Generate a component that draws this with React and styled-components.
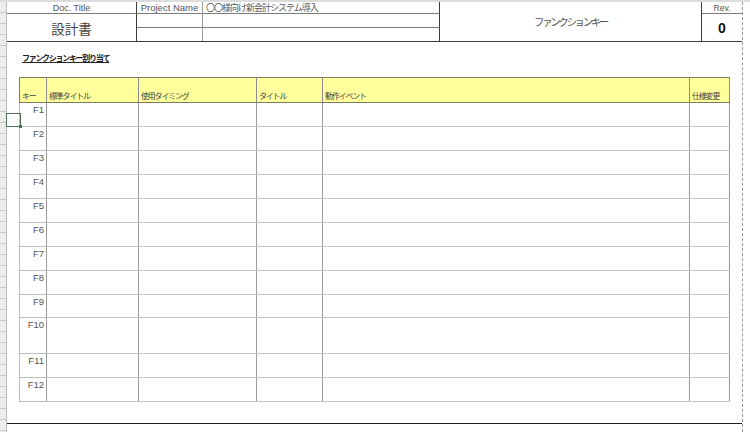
import React from 'react';
import styled, { createGlobalStyle } from 'styled-components';

const GlobalStyle = createGlobalStyle`
  html, body {
    margin: 0;
    padding: 0;
    background: #fff;
  }
  body {
    font-family: "Liberation Sans", "Noto Sans CJK JP", sans-serif;
    color: #444;
  }
`;

const JP = `"Liberation Sans", "Noto Sans CJK JP", sans-serif`;

const Page = styled.div`
  display: flex;
  width: 750px;
  height: 432px;
  overflow: hidden;
  border-top: 2px solid #dcdcdc;
  box-sizing: border-box;
  position: relative;
`;

const RowHeader = styled.div`
  width: 6px;
  flex: none;
  background: repeating-linear-gradient(
    to bottom,
    #ececec 0px,
    #ececec 10px,
    #c9c9c9 10px,
    #c9c9c9 11px
  );
  border-right: 1px solid #bdbdbd;
`;

const Sheet = styled.div`
  width: 736px;
  flex: none;
  display: flex;
  flex-direction: column;
  border-right: 1px dashed #9a9a9a;
  box-sizing: border-box;
`;

const Header = styled.div`
  display: grid;
  grid-template-columns: 130px 66px 237px 262px 40px;
  grid-template-rows: 12px 14px 13px;
  border-bottom: 1px solid #3c3c3c;
`;

const Cell = styled.div`
  box-sizing: border-box;
  display: flex;
  align-items: center;
  justify-content: ${(p) => p.$align || 'center'};
  padding: ${(p) => (p.$align === 'flex-start' ? '0 0 0 3px' : '0')};
  grid-column: ${(p) => p.$col};
  grid-row: ${(p) => p.$row};
  border-bottom: ${(p) => (p.$bottom ? '1px solid #7a7a7a' : 'none')};
  border-right: ${(p) => (p.$right === 'dark' ? '1px solid #3c3c3c' : p.$right ? '1px solid #9a9a9a' : 'none')};
  font-family: ${JP};
  font-size: ${(p) => p.$size || 9}px;
  font-weight: ${(p) => (p.$bold ? 700 : 400)};
  letter-spacing: ${(p) => p.$ls || 0}px;
  color: ${(p) => p.$color || '#555'};
  white-space: nowrap;
  overflow: hidden;
`;

const SectionTitle = styled.div`
  margin: 12px 0 0 15px;
  height: 10px;
  line-height: 10px;
  font-family: ${JP};
  font-size: 8px;
  font-weight: 700;
  letter-spacing: -1.3px;
  color: #222;
  text-decoration: underline;
`;

const Table = styled.table`
  margin: 13px 0 0 12px;
  border-collapse: collapse;
  table-layout: fixed;
  width: 710px;
`;

const Col = styled.col`
  width: ${(p) => p.$w}px;
`;

const Th = styled.th`
  height: 23px;
  padding: 0 0 1px 2px;
  background: #ffff9c;
  border: 1px solid #7c7c60;
  border-right-color: #8c8c8c;
  vertical-align: bottom;
  text-align: left;
  font-family: ${JP};
  font-size: 8px;
  font-weight: 400;
  letter-spacing: -1.2px;
  color: #444;
  white-space: nowrap;
  overflow: hidden;
`;

const Row = styled.tr`
  height: ${(p) => p.$h}px;
`;

const KeyCell = styled.td`
  border: 1px solid #bdbdbd;
  border-right-color: #9a9a9a;
  padding: 2px 2px 0 0;
  vertical-align: top;
  text-align: right;
  font-family: ${JP};
  font-size: 9.5px;
  line-height: 9px;
  color: #555;
`;

const Td = styled.td`
  border: 1px solid #c2c2c2;
  border-left-color: #9a9a9a;
  border-right-color: #9a9a9a;
  padding: 0;
`;

const BottomRule = styled.div`
  margin-top: 21px;
  border-top: 1px solid #1e1e1e;
`;

const Selection = styled.div`
  position: absolute;
  left: 6px;
  top: 111px;
  width: 13px;
  height: 12px;
  border: 1px solid #4f6f55;
  &::after {
    content: '';
    position: absolute;
    right: -2px;
    bottom: -2px;
    width: 3px;
    height: 3px;
    background: #4f6f55;
  }
`;

const columns = [
  { label: 'キー', w: 27 },
  { label: '標準タイトル', w: 92 },
  { label: '使用タイミング', w: 118 },
  { label: 'タイトル', w: 66 },
  { label: '動作イベント', w: 367 },
  { label: '仕様変更', w: 40 },
];

const keys = [
  ['F1', 24], ['F2', 24], ['F3', 24], ['F4', 24], ['F5', 24], ['F6', 24],
  ['F7', 24], ['F8', 24], ['F9', 23], ['F10', 36], ['F11', 24], ['F12', 24],
];

export default function App() {
  return (
    <>
      <GlobalStyle />
      <Page>
        <RowHeader />
        <Sheet>
          <Header>
            <Cell $col="1" $row="1" $bottom $right="dark">Doc. Title</Cell>
            <Cell $col="1" $row="2 / 4" $right="dark" $size={13.5} $color="#444">設計書</Cell>
            <Cell $col="2" $row="1" $bottom $right $size={9.5}>Project Name</Cell>
            <Cell $col="3" $row="1" $bottom $right="dark" $align="flex-start" $ls={-1}>〇〇様向け新会計システム導入</Cell>
            <Cell $col="2" $row="2" $bottom $right />
            <Cell $col="3" $row="2" $bottom $right="dark" />
            <Cell $col="2" $row="3" $right />
            <Cell $col="3" $row="3" $right="dark" />
            <Cell $col="4" $row="1 / 4" $right="dark" $size={10.5} $ls={-2.4}>ファンクションキー</Cell>
            <Cell $col="5" $row="1" $bottom $size={8.5}>Rev.</Cell>
            <Cell $col="5" $row="2 / 4" $size={14} $bold $color="#111">0</Cell>
          </Header>
          <SectionTitle>ファンクションキー割り当て</SectionTitle>
          <Table>
            <colgroup>
              {columns.map((c) => (
                <Col key={c.label} $w={c.w} />
              ))}
            </colgroup>
            <thead>
              <tr>
                {columns.map((c) => (
                  <Th key={c.label}>{c.label}</Th>
                ))}
              </tr>
            </thead>
            <tbody>
              {keys.map(([k, h]) => (
                <Row key={k} $h={h}>
                  <KeyCell>{k}</KeyCell>
                  <Td />
                  <Td />
                  <Td />
                  <Td />
                  <Td />
                </Row>
              ))}
            </tbody>
          </Table>
          <BottomRule />
        </Sheet>
        <Selection />
      </Page>
    </>
  );
}
